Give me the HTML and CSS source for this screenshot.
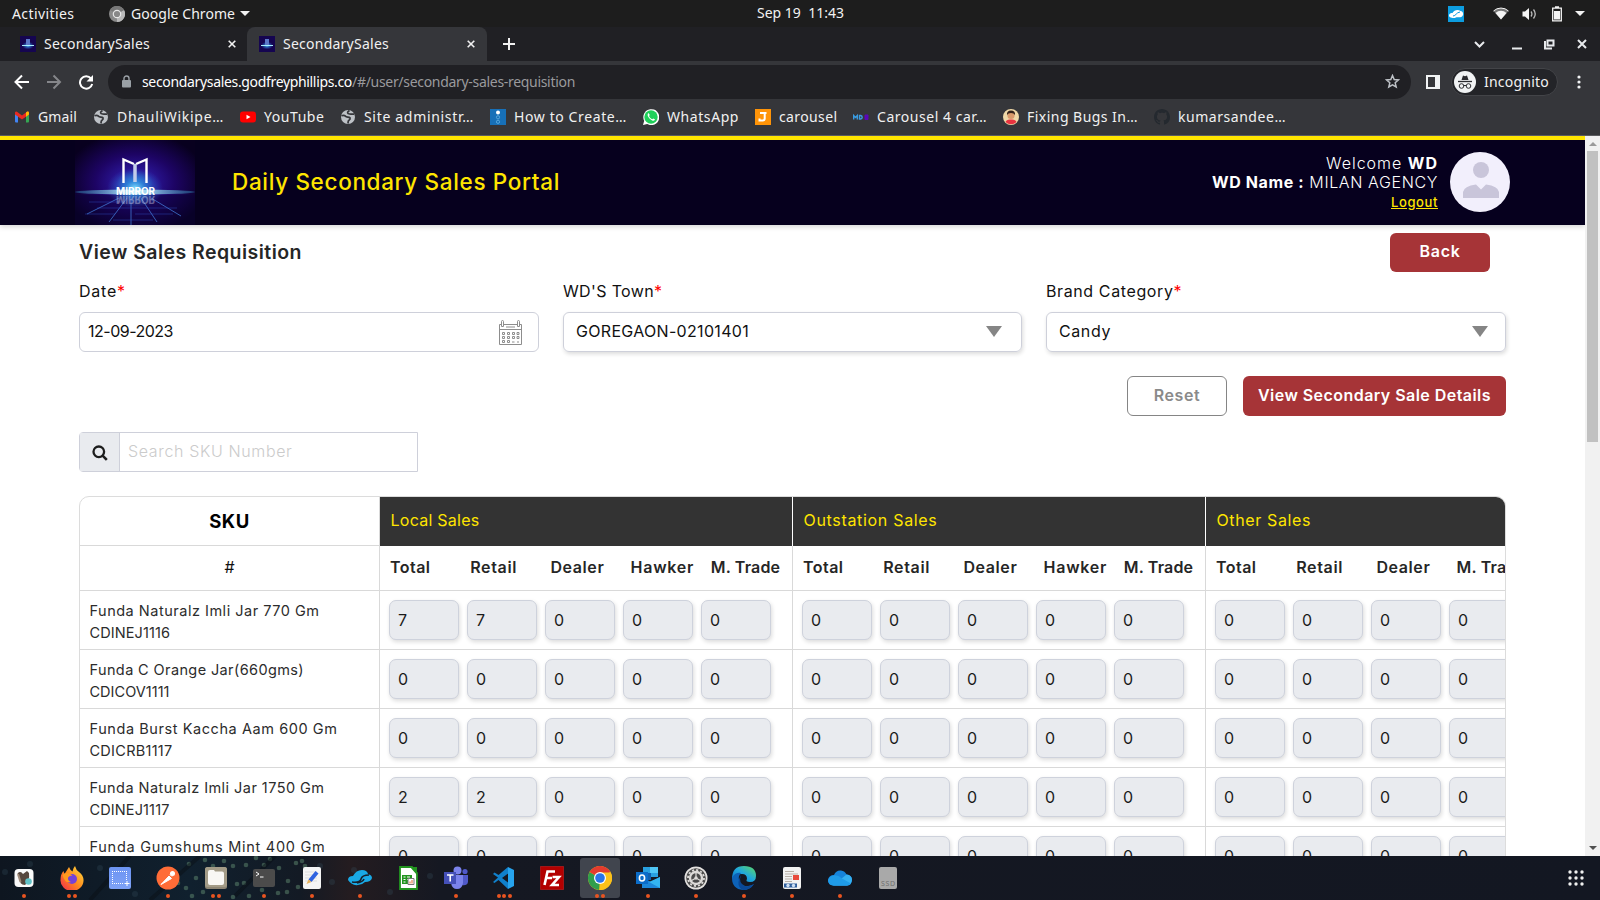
FILE: index.html
```html
<!DOCTYPE html>
<html lang="en">
<head>
<meta charset="utf-8">
<title>SecondarySales</title>
<link rel="stylesheet" href="styles.css">
</head>
<body>
<svg width="0" height="0" class="defs">
  <defs>
    <radialGradient id="glow" cx=".5" cy=".5" r=".6"><stop offset="0" stop-color="#2a6fd0"/><stop offset=".25" stop-color="#2a1596"/><stop offset=".55" stop-color="#1d0464"/><stop offset="1" stop-color="#08001f"/></radialGradient>
    <radialGradient id="core"><stop offset="0" stop-color="#7fe0ff"/><stop offset=".35" stop-color="#2f8fe0" stop-opacity=".75"/><stop offset="1" stop-color="#2a60d0" stop-opacity="0"/></radialGradient>
    <linearGradient id="beam"><stop offset="0" stop-color="#2a86b8" stop-opacity=".4"/><stop offset=".5" stop-color="#c8f6ff"/><stop offset="1" stop-color="#2a86b8" stop-opacity=".4"/></linearGradient>
    <linearGradient id="fox" x1="1" y1="0" x2="0" y2="1"><stop offset="0" stop-color="#ffe23e"/><stop offset=".5" stop-color="#ff8a1e"/><stop offset="1" stop-color="#f2264f"/></linearGradient>
    <linearGradient id="edge" x1="0" y1="1" x2="1" y2="0"><stop offset="0" stop-color="#0a6cc4"/><stop offset=".5" stop-color="#1fa7de"/><stop offset="1" stop-color="#5fdc60"/></linearGradient>
    <linearGradient id="shot" x1="0" y1="0" x2="0" y2="1"><stop offset="0" stop-color="#6c94f2"/><stop offset="1" stop-color="#7ea2f7"/></linearGradient>
    <symbol id="fav" viewBox="0 0 16 16"><rect width="16" height="16" fill="#150550"/><ellipse cx="8" cy="9.500" rx="6" ry="4" fill="url(#core)"/><rect x="6" y="3" width="4" height="6" fill="#5b78c8"/><path d="M2 9.500h12" stroke="#a6f0ff"/></symbol>
    <symbol id="globe" viewBox="0 0 16 16"><circle cx="8" cy="8" r="7" fill="#bdc1c6"/><path d="M1.500 6.800q2.500-1 4 .4c1 1.500 3.500.2 4.500 1.600.8 1.600-1.200 2.200-1.700 3.200l-.4 2.500M9.500 1.500q-2.800 1.800-1.500 3 2.200.7 3.500.5l2.800.2" fill="none" stroke="#35363a" stroke-width="1.700"/></symbol>
  </defs>
</svg>

<div class="topbar">
  <span class="activities" data-w="62.500">Activities</span>
  <svg class="i16" viewBox="0 0 16 16"><circle cx="8" cy="8" r="8" fill="#8a8a8a"/><path d="M8 8 15 4a8 8 0 0 1-7 12z" fill="#b9b9b9"/><path d="M8 8 1 4a8 8 0 0 1 14 0z" fill="#777"/><circle cx="8" cy="8" r="4.300" fill="#e8e8e8"/><circle cx="8" cy="8" r="3.100" fill="#888"/></svg>
  <span class="appname" data-w="104">Google Chrome</span><i class="caret"></i>
  <span class="clock" data-w="87">Sep 19&nbsp; 11:43</span>
  <div class="tray">
    <svg width="16" height="16" viewBox="0 0 16 16"><rect width="16" height="16" fill="#0d9de0"/><path d="M1 9.500c0-2 2-2.500 3.500-2.500C6 4 10 3 12.500 5c3 .5 3.500 4 1.500 5.500-2 1.500-5 0-7 1.500-3 0-6-.5-6-2.500z" fill="#fff"/><path d="M5 10c3 0 3-3.500 7-4" stroke="#0d9de0" fill="none"/></svg>
    <svg class="wifi" width="16" height="14" viewBox="0 0 16 14"><path d="M.5 4a11 11 0 0 1 15 0L8 12.500z" fill="#777"/><path d="M2.500 6a8 8 0 0 1 11 0L8 12.500z" fill="#f4f4f4"/><path d="M.5 4a11 11 0 0 1 15 0" stroke="#f4f4f4" fill="none"/></svg>
    <svg class="vol" width="15" height="14" viewBox="0 0 15 14"><path d="M.5 4.500H3L7 1v12L3 9.500H.5z" fill="#f4f4f4"/><path d="M9 4.500q1.800 2.500 0 5M11.500 2.500q3.500 4.500 0 9" stroke="#bbb" fill="none" stroke-width="1.300"/></svg>
    <svg class="bat" width="10" height="16" viewBox="0 0 10 16"><path d="M.7 2.200h8.600v12.600H.7zM3 1h4" fill="none" stroke="#f4f4f4" stroke-width="1.300"/><path d="M2 5h6v8.500H2z" fill="#f4f4f4"/></svg>
    <i class="caret"></i>
  </div>
</div>

<div class="tabs">
  <div class="tab"><svg class="i16"><use href="#fav"/></svg><span data-w="106">SecondarySales</span><svg class="x" viewBox="0 0 8 8"><path d="M.7.7l6.600 6.600M7.300.7.7 7.300"/></svg></div>
  <div class="tab on"><svg class="i16"><use href="#fav"/></svg><span data-w="106">SecondarySales</span><svg class="x" viewBox="0 0 8 8"><path d="M.7.7l6.600 6.600M7.300.7.7 7.300"/></svg></div>
  <svg class="plus" viewBox="0 0 12 12"><path d="M6 0v12M0 6h12"/></svg>
  <svg class="winctl" width="116" height="16" viewBox="0 0 116 16" fill="none" stroke="#e8eaed" stroke-width="2"><path d="m1 6 4.500 4.500L10 6"/><path d="M38 12.500h10"/><path d="M73.500 4.500h6v5h-6z"/><path d="M71 5v7.500h7"/><path d="m104 4 8 8m0-8-8 8"/></svg>
</div>

<div class="toolbar">
  <svg width="80" height="16" viewBox="0 0 80 16" fill="none" stroke-width="2"><path d="M15 8H2M8 1.500 1.500 8 8 14.500" stroke="#fff"/><path d="M33 8h13M39.500 1.500 46 8l-6.500 6.500" stroke="#85868a"/><path d="M77 4.500A6.200 6.200 0 1 0 78.200 10" stroke="#fff"/><path d="M79 1v6.500h-6.500z" fill="#fff"/></svg>
  <div class="omni">
    <svg width="9" height="13" viewBox="0 0 9 13"><rect y="5" width="9" height="7.500" rx="1" fill="#9aa0a6"/><path d="M2 5V3.500a2.500 2.500 0 0 1 5 0V5" fill="none" stroke="#9aa0a6" stroke-width="1.400"/></svg>
    <span class="host" data-w="210">secondarysales.godfreyphillips.co</span><span class="path" data-w="223">/#/user/secondary-sales-requisition</span>
    <svg class="star" width="15" height="15" viewBox="0 0 15 15"><path d="m7.500 1.500 1.700 4 4.300.4-3.300 2.900 1 4.200-3.700-2.200-3.700 2.200 1-4.200L1.500 5.900l4.300-.4z" fill="none" stroke="#bdc1c6" stroke-width="1.500"/></svg>
  </div>
  <svg class="side" width="14" height="14" viewBox="0 0 14 14"><path d="M1 1h12v12H1z" fill="none" stroke="#f1f3f4" stroke-width="2"/><path d="M9 0h5v14H9z" fill="#f1f3f4"/></svg>
  <div class="incog"><svg width="22" height="22" viewBox="0 0 22 22"><circle cx="11" cy="11" r="11" fill="#f1f3f4"/><path d="M7.500 9 9 4.500l2 .7 2-.7L14.500 9z" fill="#2b2c30"/><path d="M4 10.500h14" stroke="#2b2c30" stroke-width="1.300"/><circle cx="7.500" cy="15" r="2.300" fill="none" stroke="#2b2c30"/><circle cx="14.500" cy="15" r="2.300" fill="none" stroke="#2b2c30"/><path d="M9.800 14.500h2.400" stroke="#2b2c30"/></svg><span data-w="65">Incognito</span></div>
  <svg class="kebab" width="4" height="14" viewBox="0 0 4 14" fill="#f1f3f4"><circle cx="2" cy="2" r="1.600"/><circle cx="2" cy="7" r="1.600"/><circle cx="2" cy="12" r="1.600"/></svg>
</div>

<div class="bookmarks">
  <div><svg class="i16" viewBox="0 0 16 16"><path d="M1 3.500 4 5v8.500H2a1 1 0 0 1-1-1z" fill="#4285f4"/><path d="M12 5.500l3-2v9a1 1 0 0 1-1 1h-2z" fill="#34a853"/><path d="M1 3.500q.5-1.500 2-.8L8 6.500l5-3.800q1.500-.7 2 .8v2L8 10.500 1 5.500z" fill="#ea2a20"/><path d="m12 3.500 1.200-.9q1.800-.4 1.800 1.400v1.600l-3 2.100z" fill="#fbbc04"/></svg><span data-w="39">Gmail</span></div>
  <div><svg class="i16"><use href="#globe"/></svg><span data-w="107">DhauliWikipe…</span></div>
  <div><svg class="i16" viewBox="0 0 16 16"><rect y="2.500" width="16" height="11" rx="3" fill="#f00"/><path d="M6.500 5.700v4.600l4-2.300z" fill="#fff"/></svg><span data-w="60.500">YouTube</span></div>
  <div><svg class="i16"><use href="#globe"/></svg><span data-w="110">Site administr…</span></div>
  <div><svg class="i16" viewBox="0 0 16 16"><path fill="#1770b8" d="M0 0h16v16H0z"/><circle cx="8" cy="3.500" r="2" fill="#fff"/><circle cx="8" cy="8.300" r="1.600" fill="none" stroke="#56a6dc"/><circle cx="8" cy="12.800" r="1.600" fill="none" stroke="#56a6dc"/></svg><span data-w="113">How to Create…</span></div>
  <div><svg class="i16" viewBox="0 0 16 16"><path d="M0 16l1.200-4.200A8 8 0 1 1 4.200 15z" fill="#fff"/><circle cx="8" cy="8" r="6.700" fill="#1fd05a"/><path d="M5.500 4c-1.500 1-1 3.500 1.200 5.700S11.500 12.500 12 10.600L10.300 9.400l-1 .9C8 9.800 6.500 8.300 6 7l.8-1z" fill="#fff"/></svg><span data-w="72">WhatsApp</span></div>
  <div><svg class="i16" viewBox="0 0 16 16"><path fill="#ff9408" d="M0 0h16v16H0z"/><path d="M5 4h6.500M9.700 4v5.500q0 2-2 2H4.500V9.500" fill="none" stroke="#fff" stroke-width="2"/></svg><span data-w="58.500">carousel</span></div>
  <div><svg class="i16" viewBox="0 0 16 16"><path d="M.7 10.500v-4L2.500 8.500 4.300 6.500v4M6.500 6.500v3.500h1q1.700-.2 1.700-1.700T7.500 6.500z" fill="none" stroke="#3a9be0" stroke-width="1.400"/><path d="M12 6v4.500h3V8.300h-2.500H15V6z" fill="#5a08b8" stroke="#5a08b8"/></svg><span data-w="110">Carousel 4 car…</span></div>
  <div><svg class="i16" viewBox="0 0 16 16"><circle cx="8" cy="8" r="8" fill="#f0d9a8"/><path d="M2.500 13q1-3 5.500-2.500 4.500-.5 5.500 2.500a8 8 0 0 1-11 0z" fill="#e83340"/><circle cx="8" cy="6.500" r="3.600" fill="#d99a6c"/><path d="M4 6q-.5-4.500 4-4.500T12 6q-1-2-4-2T4 6z" fill="#33221a"/></svg><span data-w="111">Fixing Bugs In…</span></div>
  <div><svg class="i16" viewBox="0 0 16 16"><path fill="#24292f" d="M8 0C3.580 0 0 3.580 0 8c0 3.540 2.290 6.530 5.470 7.590.4.070.55-.17.55-.38 0-.19-.01-.82-.01-1.490-2.010.37-2.530-.49-2.690-.94-.09-.23-.48-.94-.82-1.130-.28-.15-.68-.52-.01-.53.63-.01 1.080.58 1.230.82.72 1.210 1.870.87 2.330.66.07-.52.28-.87.51-1.070-1.780-.2-3.640-.89-3.640-3.950 0-.87.31-1.590.82-2.150-.08-.2-.36-1.020.08-2.120 0 0 .67-.21 2.200.82.64-.18 1.320-.27 2-.27s1.360.09 2 .27c1.530-1.040 2.200-.82 2.200-.82.44 1.100.16 1.920.08 2.120.51.56.82 1.270.82 2.150 0 3.070-1.870 3.750-3.650 3.950.29.25.54.73.54 1.480 0 1.070-.01 1.930-.01 2.200 0 .21.150.46.55.38A8.010 8.010 0 0 0 16 8c0-4.420-3.580-8-8-8z"/></svg><span data-w="108">kumarsandee…</span></div>
</div>

<div class="view">
  <div class="page">
    <header>
      <svg class="logo" width="120" height="85" viewBox="0 0 120 85">
        <rect width="120" height="85" fill="url(#glow)"/>
        <path d="M0 55h120v30H0z" fill="#0a0238" fill-opacity=".4"/>
        <g stroke="#3355d0" stroke-opacity=".4"><path d="M52 58 34 82M66 58l16 24M56 54v31M76 58l30 18M44 58 12 74" stroke="#4a8ff0" stroke-opacity=".65"/><path d="M14 62h36M22 68h80M10 74h30M60 74h38M38 80h40"/></g>
        <ellipse cx="60" cy="48" rx="28" ry="20" fill="url(#core)"/>
        <ellipse cx="60" cy="52" rx="60" ry="2.500" fill="url(#beam)"/>
        <path d="M48.500 43V19.500L59 24M71.500 43V19.500L61 24" fill="none" stroke="#fff" stroke-width="2.400"/>
        <path d="M60 24v18" stroke="#c3cdea" stroke-width="3.500"/>
        <text x="41" y="54.500" class="mirror" textLength="39" lengthAdjust="spacingAndGlyphs">MIRROR</text>
        <text x="41" y="-56" class="mirror faint" textLength="39" lengthAdjust="spacingAndGlyphs" transform="scale(1 -1)">MIRROR</text>
      </svg>
      <h1 data-w="328">Daily Secondary Sales Portal</h1>
      <div class="who">
        <div><span data-w="112">Welcome <b>WD</b></span></div>
        <div><span data-w="226"><b>WD Name :</b> MILAN AGENCY</span></div>
        <a data-w="47">Logout</a>
      </div>
      <svg class="avatar" width="60" height="60" viewBox="0 0 60 60"><circle cx="30" cy="30" r="30" fill="#f2effc"/><circle cx="31" cy="18" r="8" fill="#c9c5da"/><path d="M13 46v-6q1-6 13-7.500l5 5 5-5Q48 34 49 40v6z" fill="#c9c5da"/></svg>
    </header>
    <main>
      <div class="headrow"><h2 data-w="223">View Sales Requisition</h2><button class="btn back"><span data-w="41">Back</span></button></div>
      <div class="fields">
        <div><label><span data-w="38">Date</span><em>*</em></label><div class="ctl date"><span data-w="85">12-09-2023</span>
          <svg width="23" height="25" viewBox="0 0 23 25" fill="none" stroke="#8d8d8d"><path d="M3 4.500H.5v20h22v-20H20M5 4.500h13M.5 9.500h22M7 7h9"/><path d="M2.500 1.500q0-1 1-1t1 1v5h-2zM18.500 1.500q0-1 1-1t1 1v5h-2z"/><path d="M3.500 12.500h2v2h-2zM8.500 12.500h2v2h-2zM13.500 12.500h2v2h-2zM18 12.500h2v2h-2zM3.500 16.500h2v2h-2zM8.500 16.500h2v2h-2zM13.500 16.500h2v2h-2zM18 16.500h2v2h-2zM3.500 20.500h2v2h-2zM8.500 20.500h2v2h-2zM13 22h2.500M18 22h2"/></svg></div></div>
        <div><label><span data-w="91">WD'S Town</span><em>*</em></label><div class="ctl sel town"><span data-w="173">GOREGAON-02101401</span><i class="tri"></i></div></div>
        <div><label><span data-w="127.500">Brand Category</span><em>*</em></label><div class="ctl sel"><span data-w="52">Candy</span><i class="tri"></i></div></div>
      </div>
      <div class="actions"><button class="btn reset"><span data-w="46.500">Reset</span></button><button class="btn go"><span data-w="233">View Secondary Sale Details</span></button></div>
      <div class="search"><div class="addon"><svg width="16" height="16" viewBox="0 0 16 16" fill="none" stroke="#1d1d1d" stroke-width="2.300"><circle cx="6.800" cy="6.800" r="5.300"/><path d="m10.600 10.600 4.200 4.200" stroke-width="2.600"/></svg></div><div class="box"><span data-w="164.500">Search SKU Number</span></div></div>
      <div class="grid" id="grid"></div>
    </main>
  </div>
  <div class="scroll"><i class="up"></i><div class="thumb"></div><i class="down"></i></div>
</div>

<div class="dock">
  <svg class="wall" width="700" height="44" viewBox="0 0 700 44" id="wall"></svg>
  <div class="app" data-n="1"><svg viewBox="0 0 24 24"><rect x="2.500" y="3" width="19" height="18" rx="4" fill="#fafafa"/><path d="M5.500 7.500q3-3 5.500.5l4-3 2 2q1 8-4 12-6-.500-5-6z" fill="#56473d"/><path d="M6 8l2.500 8" stroke="#a08c7c" stroke-width="2"/><circle cx="16.500" cy="15.500" r="3.300" fill="#62c3c8"/></svg></div>
  <div class="app" data-n="2"><svg viewBox="0 0 24 24"><path d="M15 0q1 4 4 6 5 4 4.500 9A11.500 10.500 0 0 1 .5 14Q.5 8 3.500 5l1 3L9 1q1 3 3.500 4.500Q13 2 15 0z" fill="url(#fox)"/><circle cx="12" cy="13" r="5" fill="#7542d8"/><path d="M2.500 9q4-4 10 .5-4 0-4.500 2.500t3 4q-6 2-8.500-7z" fill="#ff9a1f"/></svg></div>
  <div class="app"><svg viewBox="0 0 24 24"><rect x="1" y="1" width="22" height="22" rx="2" fill="url(#shot)"/><path d="M4 5.500h15M4 17.500h12M4.500 5v13M18.500 5v10" stroke="#fff" stroke-dasharray="1 1"/><path d="M19 15v5M16.500 17.500h5" stroke="#fff"/></svg></div>
  <div class="app" data-n="1"><svg viewBox="0 0 24 24"><circle cx="12" cy="12" r="11.500" fill="#ff6c37"/><path d="M5 18.500 13 10l2.500 2.500zM14 8.500l2 2" fill="#fff" stroke="#fff"/><circle cx="16.500" cy="7.500" r="2.500" fill="#fff"/></svg></div>
  <div class="app" data-n="2"><svg viewBox="0 0 24 24"><rect x="1" y="1" width="22" height="22" rx="2.500" fill="#8e8674"/><rect x="1" y="1" width="22" height="20" rx="2.500" fill="#a39b87"/><path d="M4 6q0-2 2-2h4l1 1.500h7q2 0 2 2V17q0 2-2 2H6q-2 0-2-2z" fill="#f8f7f4"/></svg></div>
  <div class="app" data-n="1"><svg viewBox="0 0 24 24"><rect x="1" y="3" width="22" height="18" rx="2" fill="#4b4b4b"/><path d="m4 6 3 2-3 2M8 11h3.500" stroke="#fff" fill="none"/></svg></div>
  <div class="app" data-n="1"><svg viewBox="0 0 24 24"><rect x="3" y="1" width="18" height="22" rx="2" fill="#f4f4f4"/><path d="M5 6h12M5 9h12M5 12h12M5 15h12" stroke="#ddd"/><path d="M8.500 13.500 15.500 5l3 2.500-7 8.500z" fill="#2e62e0"/><path d="m8.500 13.500-2 4.500 5-2z" fill="#e8b25c"/></svg></div>
  <div class="app" data-n="1"><svg viewBox="0 0 24 24"><path d="M0 14q0-4 5-4Q8 4 14 4q5 0 6 4 4 1 4 4-1 4-7 4-3 3-7 3-6 1-10-5z" fill="#19a9e5"/><path d="M4 16q8 1 9-3t8-4M9 17q6-1 7-4" stroke="#17212c" stroke-width="1.600" fill="none"/></svg></div>
  <div class="app"><svg viewBox="0 0 24 24"><path d="M4 1h12l5 6v16H4z" fill="#fff" stroke="#22951f" stroke-width="1.800"/><path d="M14 1h7v8z" fill="#22951f"/><path d="M6 9h10v9H6z" fill="#22951f"/><path d="M7.500 11h2M11 11h3M7.500 13.500h2M11 13.500h2M7.500 16h2" stroke="#fff"/><path d="M12 12.500h6v6h-6z" fill="#fff" stroke="#777"/><path d="M14 17.500v-2M16 17.500v-3.500" stroke="#e0662a"/></svg></div>
  <div class="app" data-n="1"><svg viewBox="0 0 24 24"><circle cx="13.500" cy="4.500" r="4" fill="#7b83eb"/><circle cx="21" cy="5.500" r="2.600" fill="#5059c9"/><path d="M17 9h7v7q-1 4-6 3z" fill="#5059c9"/><path d="M9 9h10v8q-1 6-6 6t-6-6z" fill="#7b83eb"/><path d="M0 6h12v12H0z" fill="#4550b8"/><path d="M3 9h6.500M6.200 9v6.500" stroke="#fff" stroke-width="1.600"/></svg></div>
  <div class="app" data-n="3"><svg viewBox="0 0 24 24"><path d="M16 1v22L6.500 14 2.500 17 1 16l5-4.500L1 8l1.500-1.500L6.500 9zM16 7.500 10 12l6 4.500z" fill="#1080cc" fill-rule="evenodd"/><path d="m16 1 6 3v16l-6 3z" fill="#27a4ee"/></svg></div>
  <div class="app"><svg viewBox="0 0 24 24"><path d="M.5.500h23v23H.5z" fill="#b30000" stroke="#e02020" stroke-dasharray="1 1"/><path d="M4.500 19 7.500 5.500h7.500M6.500 12H12M12.500 11h6.500l-7 8h7" fill="none" stroke="#fff" stroke-width="2.600"/></svg></div>
  <div class="app active" data-n="2"><svg viewBox="0 0 24 24"><circle cx="12" cy="12" r="12" fill="#fcc11a"/><path d="M12 12 1.600 6a12 12 0 0 0 9.600 18z" fill="#2f9e4c"/><path d="M12 12 1.600 6a12 12 0 0 1 20.800 0z" fill="#e33b2e"/><path d="M12 6.500h10.700A12 12 0 0 1 11.200 24l5.600-9z" fill="#fcc11a"/><circle cx="12" cy="12" r="6" fill="#fff"/><circle cx="12" cy="12" r="4.800" fill="#2a74e8"/></svg></div>
  <div class="app" data-n="1"><svg viewBox="0 0 24 24"><path d="M7 1h15v10H7z" fill="#28a0e0"/><path d="M14 1h8v6h-8z" fill="#4fc6f5"/><path d="M7 7h8v7H7z" fill="#0f5fae"/><path d="M6 11l9 5 9-5v11H6z" fill="#1c86d8"/><path d="M24 11v11L13 16z" fill="#33b4f0"/><path d="M0 6h12v12H0z" fill="#0b6cc8"/><ellipse cx="6" cy="12" rx="2.600" ry="3" fill="none" stroke="#fff" stroke-width="1.600"/></svg></div>
  <div class="app" data-n="1"><svg viewBox="0 0 24 24"><circle cx="12" cy="12" r="11.500" fill="#e4e2e0"/><circle cx="12" cy="12" r="9.800" fill="#4a4a4a"/><circle cx="12" cy="12" r="8" fill="none" stroke="#dcdad8" stroke-width="1.800" stroke-dasharray="2.100 2.080"/><circle cx="12" cy="12" r="6" fill="none" stroke="#dcdad8" stroke-width="2.400"/><path d="M12 12V6.500M12 12l4.800 2.800M12 12l-4.800 2.800" stroke="#dcdad8" stroke-width="1.200"/><circle cx="12" cy="12" r="1.700" fill="#dcdad8"/></svg></div>
  <div class="app" data-n="1"><svg viewBox="0 0 24 24"><path d="M0 13Q0 0 12 0t12 10q0 6-6 6-5 0-3-3 0-5-5-5-7 0-10 5z" fill="url(#edge)"/><path d="M0 12Q3 6 9 7q-3 3-2 7 2 7 9 6 4-.5 6-2-4 6-11 6Q0 23 0 12z" fill="#0d62b8"/><path d="M9 9q-3 8 4 11 4 1 9-2-4 6-11 6-8-4-2-15z" fill="#0a4896"/></svg></div>
  <div class="app" data-n="1"><svg viewBox="0 0 24 24"><rect x="3" y="1" width="18" height="22" rx="2" fill="#f2f2f2"/><path d="M5 5.500h9M5 8h13M5 10.500h7M5 13h7M5 15.500h7" stroke="#b8b0a8"/><path d="M13 9h6v5h-6z" fill="#e84a3c"/><path d="M4 17.500h13v4H4z" fill="#30609e"/><circle cx="8" cy="19.500" r="1.700" fill="#cfe0f4"/><circle cx="13.500" cy="19.500" r="1.700" fill="#cfe0f4"/></svg></div>
  <div class="app" data-n="1"><svg viewBox="0 0 24 24"><path d="M6 9q2-5 7-4.500 4 .5 5.500 4Q24 9 24 14q-.5 5-5 5.500H5Q0 19 0 14q1-5 6-5z" fill="#1684dc"/><path d="M18.500 8.500Q24 9 24 14q-.5 5-5 5.500L5 19.500z" fill="#35b0f2"/><path d="M5 9.500q5-1 9 3l9 5q-1 2-4 2H5Q1 19 0 15q0-4 5-5.500z" fill="#1f9be8"/></svg></div>
  <div class="app"><svg viewBox="0 0 24 24"><rect x="3" y="1" width="18" height="22" rx="2" fill="#a9a9a9"/><text x="5" y="19.500" class="ssd" textLength="14">SSD</text></svg></div>
  <svg class="apps" width="16" height="16" viewBox="0 0 16 16" fill="#f0f0f0"><circle cx="2" cy="2" r="1.700"/><circle cx="8" cy="2" r="1.700"/><circle cx="14" cy="2" r="1.700"/><circle cx="2" cy="8" r="1.700"/><circle cx="8" cy="8" r="1.700"/><circle cx="14" cy="8" r="1.700"/><circle cx="2" cy="14" r="1.700"/><circle cx="8" cy="14" r="1.700"/><circle cx="14" cy="14" r="1.700"/></svg>
</div>
<script src="app.js"></script>
</body>
</html>
```
FILE: styles.css
```css
* { box-sizing: border-box; }
body { margin: 0; width: 1600px; height: 900px; overflow: hidden; display: flex; flex-direction: column; background: #fff; font-family: "Noto Sans", "Open Sans", sans-serif; font-size: 14px; }
svg { display: block; flex: none; }
span, h1, h2, a { white-space: nowrap; }
b { font-weight: 700; }
.defs { position: absolute; }
.i16 { width: 16px; height: 16px; }
.caret { width: 0; height: 0; border: 5px solid transparent; border-top-color: #f2f2f2; border-bottom: 0; }

.topbar { position: relative; height: 27px; flex: none; background: #1d1d1d; color: #f2f2f2; display: flex; align-items: center; padding-left: 12px; }
.activities { width: 97px; }
.appname { margin: 0 5px 0 6px; }
.clock { position: absolute; left: 757px; top: 3px; }
.tray { margin-left: auto; padding-right: 15px; display: flex; align-items: center; }
.wifi { margin-left: 29px; }
.vol { margin-left: 13px; }
.bat { margin-left: 15px; }
.tray .caret { margin-left: 13px; }

.tabs { height: 34px; flex: none; background: #202024; color: #f1f1f1; display: flex; align-items: center; }
.tabs span, .bookmarks span { padding-bottom: 2px; }
.tab { display: flex; align-items: center; height: 34px; width: 247px; padding: 0 11px 0 20px; gap: 8px; }
.tab.on { background: #35363a; width: 240px; padding: 0 12px; border-radius: 8px 8px 0 0; }
.x { width: 8px; height: 8px; margin-left: auto; stroke: #f1f1f1; stroke-width: 1.6; }
.plus { width: 12px; height: 12px; margin-left: 16px; stroke: #f1f1f1; stroke-width: 2; }
.winctl { margin-left: auto; margin-right: 10px; }

.toolbar { height: 42px; flex: none; background: #35363a; display: flex; align-items: center; padding: 0 0 1px 14px; color: #f1f1f1; }
.omni { margin-left: 14px; width: 1303px; height: 34px; border-radius: 17px; background: #202024; display: flex; align-items: center; padding: 0 11px 0 14px; }
.host { margin-left: 11px; color: #fff; }
.path { color: #9a9a9d; }
.star { margin-left: auto; }
.side { margin-left: 15px; }
.incog { margin-left: 11px; width: 107px; height: 28px; border-radius: 14px; border: 1px solid #434448; background: #232428; display: flex; align-items: center; gap: 8px; padding-left: 2px; }
.kebab { margin-left: 19px; }

.bookmarks { height: 33px; flex: none; background: #35363a; border-bottom: 1px solid #5b5c60; color: #f1f1f1; display: grid; grid-template-columns: 79px 147px 100px 150px 153px 112px 98px 150px 151px 140px; padding: 0 0 4px 14px; }
.bookmarks div { display: flex; align-items: center; gap: 8px; }

.view { height: 720px; flex: none; display: flex; overflow: hidden; font-family: Inter, "Open Sans", sans-serif; font-size: 16px; color: #111; }
.page { width: 1585px; height: 720px; overflow: hidden; }
header { height: 89px; border-top: 4px solid #ffe500; background: #06001e; display: flex; align-items: center; padding: 0 75px; box-shadow: 0 2px 5px rgba(0,0,0,.16); color: #fff; }
.mirror { font: 700 10px Inter, sans-serif; fill: #fff; }
.faint { fill-opacity: .35; }
h1 { margin: 0 0 2px 37px; font-size: 22.500px; font-weight: 500; color: #ffe500; }
.who { margin-left: auto; text-align: right; line-height: 19px; display: flex; flex-direction: column; align-items: flex-end; font-weight: 300; }
.who a { font-size: 13px; font-weight: 500; color: #ffe500; text-decoration: underline; line-height: 20px; }
.avatar { margin: 0 0 1px 12px; }
main { padding: 8px 79px 0; }
.headrow { display: flex; justify-content: space-between; height: 39px; padding-right: 16px; }
h2 { margin: 0; font-size: 19.500px; line-height: 38px; font-weight: 600; color: #262626; }
.btn { font: 600 16px Inter, sans-serif; border: 0; border-radius: 6px; background: #a63437; color: #fff; height: 40px; padding: 0 0 3px; display: flex; align-items: center; justify-content: center; }
.back { width: 100px; height: 39px; padding-bottom: 4px; }
.fields { display: grid; grid-template-columns: 460px 459px 460px; column-gap: 24px; }
label { display: block; height: 40px; line-height: 39px; color: #111; }
em { color: #f00; font-style: normal; }
.ctl { height: 40px; border: 1px solid #ced0da; border-radius: 6px; display: flex; align-items: center; justify-content: space-between; padding: 0 16px 0 8px; }
.ctl span { padding-bottom: 3px; }
.sel { padding: 0 17px 1px 12px; box-shadow: 1px 2px 4px rgba(0,0,0,.14); }
.sel span { padding-bottom: 2px; }
.town { padding-right: 19px; }
.tri { border: 8px solid transparent; border-top: 11px solid #858585; border-bottom: 0; }
.actions { display: flex; justify-content: flex-end; gap: 16px; margin-top: 24px; }
.reset { width: 100px; border: 1px solid #858585; background: #fff; color: #8a8a8a; }
.go { width: 263px; }
.search { display: flex; margin-top: 16px; width: 339px; height: 40px; border: 1px solid #ced0da; border-radius: 4px 0 0 4px; }
.addon { width: 40px; background: #e9ebef; border-right: 1px solid #ced0da; display: flex; align-items: center; justify-content: center; padding-top: 2px; }
.box { padding: 0 8px 3px; display: flex; align-items: center; color: #cbcbcb; font-weight: 300; }

.grid { margin-top: 24px; width: 1427px; height: 500px; border: 1px solid #dcdcdc; border-radius: 10px 10px 0 0; overflow: hidden; }
.row { display: grid; grid-template-columns: 300px 413px 413px 413px; width: 1539px; height: 59px; border-bottom: 1px solid #d9d9d9; }
.row > div { border-right: 1px solid #d9d9d9; }
.row.top { height: 49px; }
.row.sub { height: 45px; }
.top .grp { background: #333; color: #ffe500; font-weight: 400; line-height: 47px; padding-left: 10.500px; border-color: #fff; }
.top .first { font-size: 18.500px; font-weight: 700; text-align: center; line-height: 49px; color: #000; }
.sub .first { text-align: center; line-height: 43px; }
.sub .grp { display: flex; padding-left: 10px; font-weight: 600; line-height: 43px; color: #262626; }
.sub .grp div { width: 80.200px; }
.sku { padding: 9px 0 0 9.500px; font-size: 14.500px; line-height: 22px; color: #2c2c2c; }
.cells { display: flex; gap: 8px; padding: 9px 0 0 9px; }
.cells div { width: 70px; height: 40px; border: 1px solid #ced2dc; border-radius: 7px; background: #e9ebef; line-height: 39px; padding-left: 8px; box-shadow: 1px 2px 4px rgba(0,0,0,.14); flex: none; color: #1b1b1b; }

.scroll { width: 15px; background: #f1f1f1; display: flex; flex-direction: column; align-items: center; }
.up { border: 4px solid transparent; border-bottom-color: #9a9a9a; border-top: 0; margin: 6px 0 5px; }
.thumb { width: 11px; height: 291px; background: #c1c1c1; }
.down { border: 4px solid transparent; border-top-color: #505050; border-bottom: 0; margin-top: auto; margin-bottom: 6px; }

.dock { position: relative; height: 44px; flex: none; display: flex; background: linear-gradient(90deg, #0e1620 0, #10202e 190px, #131a24 300px, #241c20 350px, #151822 440px, #131722 100%); padding-top: 2px; }
.wall { position: absolute; left: 0; top: 0; }
.app { position: relative; width: 40px; height: 40px; margin-left: 4px; margin-right: 4px; display: flex; justify-content: center; padding-top: 8px; border-radius: 3px; }
.app svg { width: 24px; height: 24px; }
.active { background: #41454e; }
.dots { position: absolute; left: 0; right: 0; top: 36px; display: flex; justify-content: center; gap: 1.500px; }
.dots i { width: 4px; height: 4px; border-radius: 2px; background: #e95420; }
.ssd { font: 7px "Noto Sans", sans-serif; fill: #707070; }
.apps { margin-left: auto; margin-right: 16px; margin-top: 12px; }
```
FILE: app.js
```js
const grid = document.getElementById('grid');
const groups = [
  { name: 'Local Sales', w: 89, cols: ['Total', 'Retail', 'Dealer', 'Hawker', 'M. Trade'] },
  { name: 'Outstation Sales', w: 134, cols: ['Total', 'Retail', 'Dealer', 'Hawker', 'M. Trade'] },
  { name: 'Other Sales', w: 94.5, cols: ['Total', 'Retail', 'Dealer', 'M. Trade'] }
];
const colWidth = { 'Total': 40.5, 'Retail': 47, 'Dealer': 54, 'Hawker': 63.5, 'M. Trade': 69.5 };
const items = [
  ['Funda Naturalz Imli Jar 770 Gm', 230, 'CDINEJ1116', 80.5, 7],
  ['Funda C Orange Jar(660gms)', 214.5, 'CDICOV1111', 80, 0],
  ['Funda Burst Kaccha Aam 600 Gm', 248, 'CDICRB1117', 83, 0],
  ['Funda Naturalz Imli Jar 1750 Gm', 235, 'CDINEJ1117', 80, 2],
  ['Funda Gumshums Mint 400 Gm', 236, '', 0, 0]
];
const span = (t, w) => `<span data-w="${w}">${t}</span>`;
let html = `<div class="row top"><div class="first">${span('SKU', 40.5)}</div>` +
  groups.map(g => `<div class="grp">${span(g.name, g.w)}</div>`).join('') + '</div>';
html += '<div class="row sub"><div class="first">#</div>' +
  groups.map(g => `<div class="grp">${g.cols.map(c => `<div>${span(c, colWidth[c])}</div>`).join('')}</div>`).join('') + '</div>';
for (const [name, w, code, cw, qty] of items) {
  html += `<div class="row"><div class="sku">${span(name, w)}<br>${code ? span(code, cw) : ''}</div>` +
    groups.map((g, gi) => `<div class="cells">${g.cols.map((c, i) => `<div>${gi === 0 && i < 2 ? qty : 0}</div>`).join('')}</div>`).join('') + '</div>';
}
grid.innerHTML = html;

// Running-window dots under each dock icon
document.querySelectorAll('.app[data-n]').forEach(a => {
  a.insertAdjacentHTML('beforeend', `<div class="dots">${'<i></i>'.repeat(+a.dataset.n)}</div>`);
});

// Wallpaper specks behind the dock
const specks = [[189,8],[196,22],[186,32],[178,27],[205,4],[213,10],[192,40],[224,5],[233,10],[246,9],[256,2],[270,3],[255,22],[264,9],[279,12],[237,28],[244,27],[233,41],[271,24],[288,25],[278,37],[287,36],[296,7],[302,5],[305,10],[298,31],[203,36],[249,40],[262,34]];
document.getElementById('wall').innerHTML = specks.map(([x, y]) => `<circle cx="${x}" cy="${y}" r="2.300" fill="#5f8a70" fill-opacity=".5"/>`).join('') +
  [[5,16],[30,8],[100,12],[135,38],[320,10],[332,26],[354,14],[390,36],[430,20]].map(([x, y]) => `<circle cx="${x}" cy="${y}" r="3" fill="#3d5666" fill-opacity=".25"/>`).join('') +
  '<path d="M90 44 130 0M150 44 200 0M235 40l40-40" stroke="#0a1016" stroke-opacity=".5" stroke-width="4"/>';

// Track each label to its set width
document.querySelectorAll('[data-w]').forEach(el => {
  const range = document.createRange();
  range.selectNodeContents(el);
  const n = el.textContent.length;
  el.style.letterSpacing = ((+el.dataset.w - range.getBoundingClientRect().width) / n).toFixed(3) + 'px';
});
```
